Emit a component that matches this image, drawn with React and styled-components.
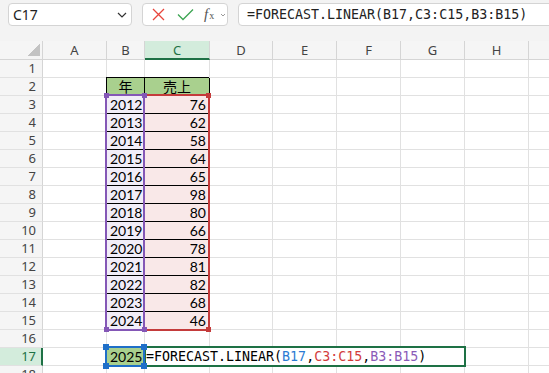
import React from 'react';
import styled, { createGlobalStyle, css } from 'styled-components';

const GlobalStyle = createGlobalStyle`
  html, body { margin: 0; padding: 0; background: #fff; overflow: hidden; }
  body { font-family: "Noto Sans", "Liberation Sans", sans-serif; }
`;

const GREEN = '#1e7145';
const MONO = '"DejaVu Sans Mono", "Noto Sans CJK JP", monospace';
const CELLFONT = 'Lato, "Noto Sans CJK JP", sans-serif';

const Page = styled.div`
  width: 549px;
  height: 373px;
  overflow: hidden;
`;

const Toolbar = styled.div`
  height: 41px;
  box-sizing: border-box;
  background: #f3f3f3;
  display: flex;
  align-items: flex-start;
  gap: 10px;
  padding: 3px 0 0 8px;
  overflow: hidden;
`;

const Box = styled.div`
  flex: 0 0 auto;
  height: 23px;
  box-sizing: border-box;
  background: #fff;
  border: 1px solid #d4d4d4;
  border-radius: 4px;
  display: flex;
  align-items: center;
`;

const NameBox = styled(Box)`
  width: 124px;
  padding: 0 4px 0 4px;
  justify-content: space-between;
  font-size: 14px;
  color: #222;
`;

const ActionBox = styled(Box)`
  width: 86px;
  padding-left: 9px;
  gap: 12px;
`;

const FormulaBox = styled(Box)`
  width: 340px;
  padding-left: 8px;
  font-family: ${MONO};
  font-size: 13.3px;
  color: #222;
  white-space: nowrap;
`;

const Fx = styled.span`
  font-family: "Liberation Serif", serif;
  font-style: italic;
  font-size: 15px;
  color: #555;
  display: flex;
  align-items: baseline;
  margin-left: -2px;
  sub { font-size: 10px; font-style: normal; margin-left: 1px; }
`;

const Sheet = styled.div`
  position: relative;
  display: grid;
  grid-template-columns: 43px 64px 38px 65px 63px 64px 64px 64px 64px 40px;
  grid-template-rows: 19px repeat(18, 18px);
`;

const Corner = styled.div`
  box-sizing: border-box;
  background: #f5f5f5;
  border-right: 1px solid #d5d5d5;
  border-bottom: 1px solid #d5d5d5;
  display: flex;
  justify-content: flex-end;
  align-items: flex-end;
  padding: 0 2px 3px 0;
  &::after {
    content: '';
    width: 13px;
    height: 13px;
    background: linear-gradient(135deg, transparent 50%, #c3c3c3 50%);
  }
`;

const ColHead = styled.div`
  box-sizing: border-box;
  background: ${p => (p.$sel ? '#d3ecdc' : '#f5f5f5')};
  border-right: 1px solid #d5d5d5;
  border-bottom: ${p => (p.$sel ? `2px solid ${GREEN}` : '1px solid #d5d5d5')};
  color: ${p => (p.$sel ? GREEN : '#444')};
  font-size: 13px;
  display: flex;
  align-items: center;
  justify-content: center;
`;

const RowHead = styled.div`
  box-sizing: border-box;
  background: ${p => (p.$sel ? '#d3ecdc' : '#f5f5f5')};
  border-right: ${p => (p.$sel ? `2px solid ${GREEN}` : '1px solid #d5d5d5')};
  border-bottom: 1px solid #e1e1e1;
  color: ${p => (p.$sel ? GREEN : '#444')};
  font-size: 13px;
  line-height: 17px;
  text-align: right;
  padding-right: ${p => (p.$sel ? '5px' : '6px')};
`;

const Cell = styled.div`
  box-sizing: border-box;
  border-right: 1px solid #e1e1e1;
  border-bottom: 1px solid #e1e1e1;
  background: ${p => p.$fill || '#fff'};
  font-family: ${CELLFONT};
  font-size: 14px;
  line-height: 17px;
  text-align: ${p => p.$align || 'left'};
  padding: 0 3px;
  color: #000;
  white-space: nowrap;
  ${p =>
    p.$boxed &&
    css`
      border-right-color: #000;
      border-bottom-color: #000;
      box-shadow: -1px -1px 0 0 #000;
    `}
`;

const RangeBox = styled.div`
  position: absolute;
  box-sizing: border-box;
  border: 2px solid ${p => p.$color};
  ${p => p.$noLeft && css`border-left: none;`}
  pointer-events: none;
`;

const Handle = styled.div`
  position: absolute;
  width: ${p => p.$size}px;
  height: ${p => p.$size}px;
  background: ${p => p.$color};
`;

const Editor = styled.div`
  position: absolute;
  box-sizing: border-box;
  border: 2px solid ${GREEN};
  background: #fff;
  font-family: ${MONO};
  font-size: 13.3px;
  line-height: 17px;
  color: #000;
  white-space: nowrap;
  padding-left: 0;
`;

const Ref = styled.span`
  color: ${p => p.$color};
`;

const PURPLE = '#8457b6';
const RED = '#c43b3b';
const BLUE = '#1f6fc8';

const COLS = ['A', 'B', 'C', 'D', 'E', 'F', 'G', 'H', 'I'];
const years = [2012, 2013, 2014, 2015, 2016, 2017, 2018, 2019, 2020, 2021, 2022, 2023, 2024];
const sales = [76, 62, 58, 64, 65, 98, 80, 66, 78, 81, 82, 68, 46];

function cellFor(r, c) {
  if (r === 2 && c === 1) return { text: '年', align: 'center', boxed: true, fill: '#a9d08e' };
  if (r === 2 && c === 2) return { text: '売上', align: 'center', boxed: true, fill: '#a9d08e' };
  if (r >= 3 && r <= 15 && c === 1) return { text: years[r - 3], align: 'right', boxed: true, fill: '#f1edf8' };
  if (r >= 3 && r <= 15 && c === 2) return { text: sales[r - 3], align: 'right', boxed: true, fill: '#f9e8e8' };
  if (r === 17 && c === 1) return { text: '2025', align: 'right', fill: '#a9d08e' };
  return { text: '' };
}

const handle = (cx, cy, size, color, key) => (
  <Handle key={key} $size={size} $color={color} style={{ left: cx - size / 2, top: cy - size / 2 }} />
);

export default function App() {
  const rows = Array.from({ length: 18 }, (_, i) => i + 1);
  return (
    <Page>
      <GlobalStyle />
      <Toolbar>
        <NameBox>
          <span>C17</span>
          <svg width="10" height="6" viewBox="0 0 10 6">
            <path d="M1 1 L5 5 L9 1" fill="none" stroke="#333" strokeWidth="1.2" />
          </svg>
        </NameBox>
        <ActionBox>
          <svg width="13" height="13" viewBox="0 0 13 13">
            <path d="M1 1 L12 12 M12 1 L1 12" stroke="#e8453c" strokeWidth="1.3" />
          </svg>
          <svg width="17" height="13" viewBox="0 0 17 13">
            <path d="M1 6.5 L6 11.5 L16 1.5" fill="none" stroke="#3da553" strokeWidth="1.3" />
          </svg>
          <Fx>
            f<sub>x</sub>
            <svg width="6" height="4" viewBox="0 0 6 4" style={{ marginLeft: 6, alignSelf: 'center' }}>
              <path d="M1 1 L3 3 L5 1" fill="none" stroke="#999" strokeWidth="1" />
            </svg>
          </Fx>
        </ActionBox>
        <FormulaBox>=FORECAST.LINEAR(B17,C3:C15,B3:B15)</FormulaBox>
      </Toolbar>
      <Sheet>
        <Corner />
        {COLS.map(c => (
          <ColHead key={c} $sel={c === 'C'}>
            {c === 'I' ? '' : c}
          </ColHead>
        ))}
        {rows.map(r => (
          <React.Fragment key={r}>
            <RowHead $sel={r === 17}>{r}</RowHead>
            {COLS.map((c, ci) => {
              const d = cellFor(r, ci);
              return (
                <Cell key={c} $align={d.align} $boxed={d.boxed} $fill={d.fill}>
                  {d.text}
                </Cell>
              );
            })}
          </React.Fragment>
        ))}

        <RangeBox $color={RED} $noLeft style={{ left: 146, top: 53, width: 64, height: 237 }} />
        <RangeBox $color={PURPLE} style={{ left: 105, top: 53, width: 40, height: 237 }} />
        {handle(208.5, 54.5, 5, RED, 'r1')}
        {handle(208.5, 288.5, 5, RED, 'r2')}
        {handle(106, 54.5, 5, PURPLE, 'p1')}
        {handle(144, 54.5, 5, PURPLE, 'p2')}
        {handle(106, 288.5, 5, PURPLE, 'p3')}
        {handle(144, 288.5, 5, PURPLE, 'p4')}

        <Editor style={{ left: 144, top: 305, width: 322, height: 21 }}>
          =FORECAST.LINEAR(<Ref $color="#2b7bd3">B17</Ref>,<Ref $color="#d23c3c">C3:C15</Ref>,
          <Ref $color="#8a5bb8">B3:B15</Ref>)
        </Editor>
        <RangeBox $color={BLUE} style={{ left: 105, top: 305, width: 40, height: 21 }} />
        {handle(106, 306, 6, BLUE, 'b1')}
        {handle(144, 306, 6, BLUE, 'b2')}
        {handle(106, 324.5, 6, BLUE, 'b3')}
        {handle(144, 324.5, 6, BLUE, 'b4')}
      </Sheet>
    </Page>
  );
}
